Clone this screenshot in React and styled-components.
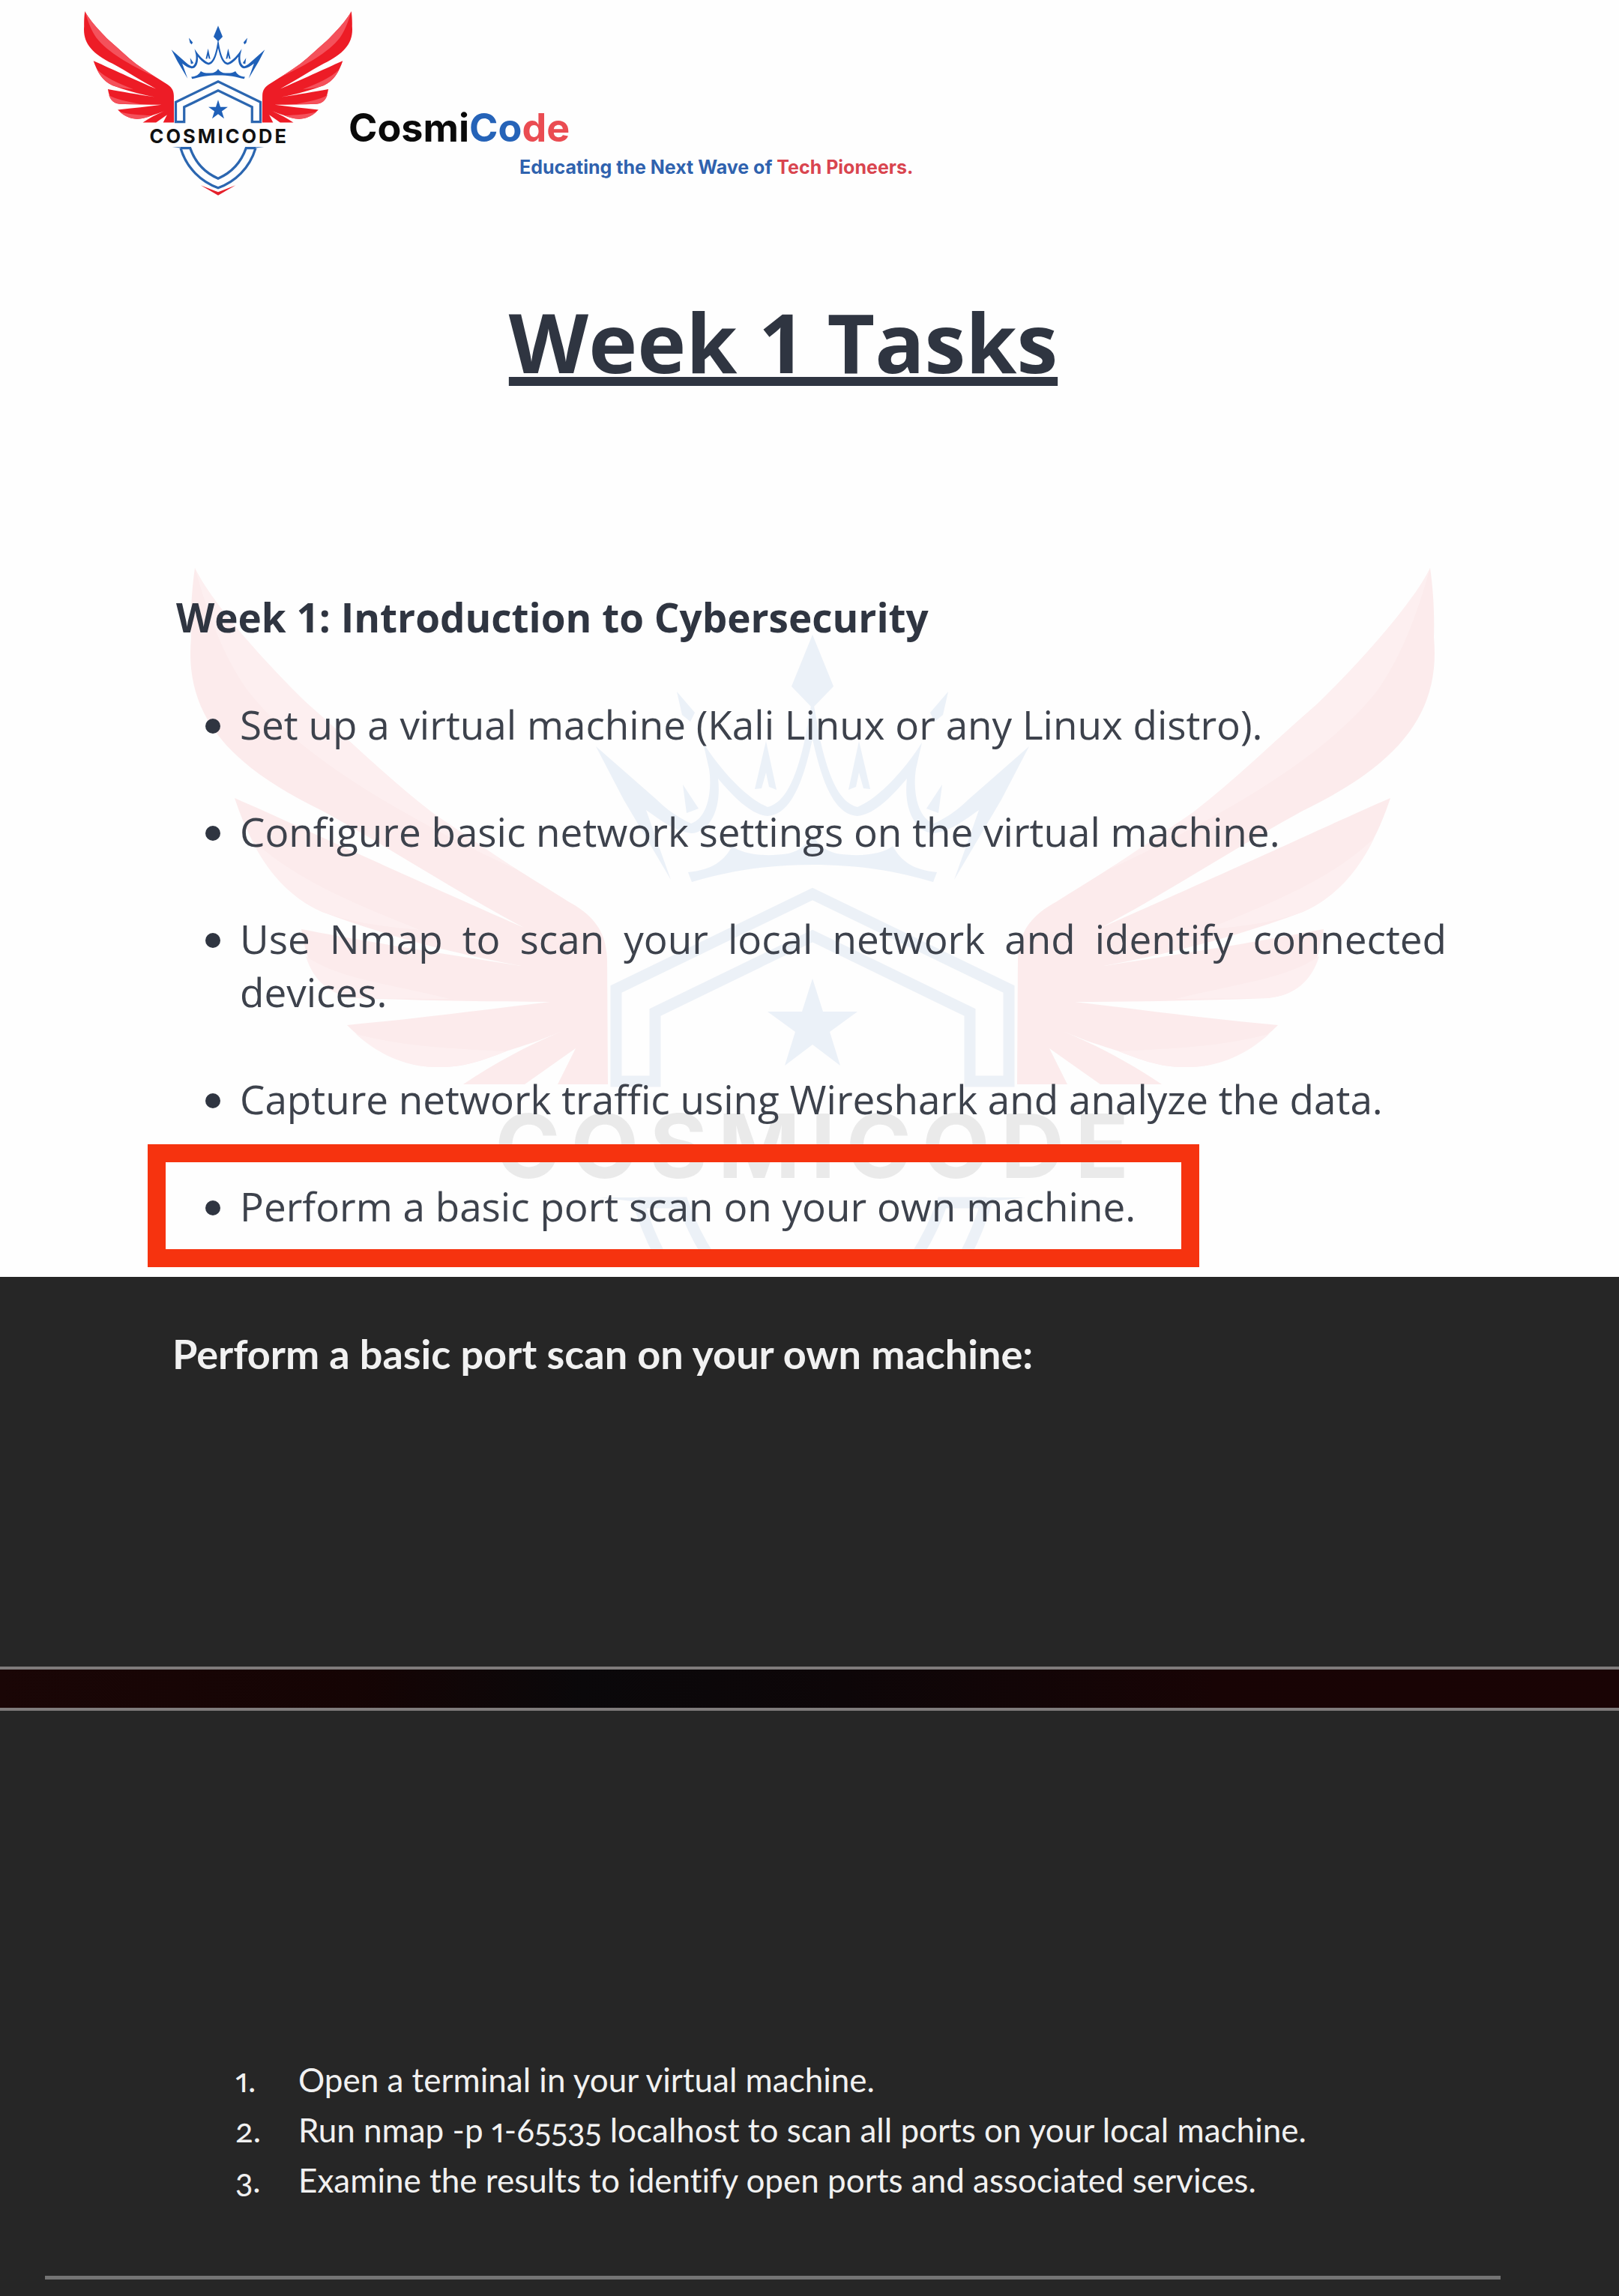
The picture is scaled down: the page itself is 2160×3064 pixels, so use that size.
import React from "react";
import styled, { createGlobalStyle } from "styled-components";

const GlobalStyle = createGlobalStyle`
  *, *::before, *::after { box-sizing: border-box; }
  body { margin: 0; background: #262626; font-variant-ligatures: none; }
  h1, h2, p, ul, ol { margin: 0; padding: 0; }
`;

const ink = "#2f3541";
const bodyFont = `"Open Sans", "Noto Sans", sans-serif`;
const slideFont = `Lato, "Open Sans", sans-serif`;

const Paper = styled.section`
  position: relative;
  background: #fefefe;
  padding-bottom: 59px;
  color: ${ink};
  font-family: ${bodyFont};
`;

const Header = styled.header`
  display: flex;
  align-items: flex-start;
  padding: 15px 112px 0;
`;

const LogoSvg = styled.svg`
  display: block;
  flex: none;
  width: ${(p) => p.$width};
  opacity: ${(p) => p.$opacity || 1};
`;

const Brand = styled.div`
  display: flex;
  flex-direction: column;
  gap: 4px;
  margin-left: -5px;
  padding-top: 124px;
  font-family: Inter, "Liberation Sans", sans-serif;
  font-weight: 700;
`;

const BrandName = styled.p`
  font-size: 52px;
  line-height: 64px;
  color: #0a0a0a;
`;

const Tagline = styled.p`
  padding-left: 228px;
  font-size: 25px;
  line-height: 32px;
  color: #2f62ae;
`;

const Tint = styled.span`
  color: ${(p) => p.$color};
`;

const Title = styled.h1`
  margin-top: 119px;
  padding-right: 70px;
  text-align: center;
  font-size: 110px;
  line-height: 148px;
  font-weight: 700;
  text-decoration: underline;
  text-decoration-thickness: 12px;
  text-underline-offset: 5px;
  text-decoration-skip-ink: none;
`;

const Watermark = styled.div`
  position: absolute;
  inset: 758px 0 30px;
  overflow: hidden;
  display: flex;
  justify-content: center;
  align-items: flex-start;
  padding-left: 8px;
`;

const Tasks = styled.div`
  position: relative;
  margin-top: 259px;
  padding: 0 230px 0 235px;
  font-size: 53px;
  line-height: 71px;
`;

const TasksHeading = styled.h2`
  font-size: 53px;
  line-height: 71px;
  font-weight: 700;
`;

const TaskList = styled.ul`
  display: flex;
  flex-direction: column;
  gap: 72px;
  margin-top: 72px;
  list-style: none;
`;

const Task = styled.li`
  position: relative;
  padding-left: 85px;
  text-align: justify;
  color: #3d424c;

  &::before {
    content: "";
    position: absolute;
    left: 39px;
    top: 28px;
    width: 20px;
    height: 20px;
    border-radius: 50%;
    background: ${ink};
  }
`;

const Highlight = styled.span`
  position: absolute;
  left: -38px;
  top: -47px;
  width: 1403px;
  height: 164px;
  border: 24px solid #f6330f;
`;

const Slide = styled.section`
  background: #262626;
  color: #f1f1f1;
  font-family: ${slideFont};
`;

const SlideTop = styled(Slide)`
  padding: 68px 230px 382px;
`;

const SlideHeading = styled.h2`
  font-size: 54px;
  line-height: 70px;
  font-weight: 700;
`;

const Divider = styled.div`
  height: 59px;
  border: solid #7f7b7b;
  border-width: 4px 0;
  background: linear-gradient(90deg, #1a0606, #150404 22%, #0a080a 36%, #0d0608 52%, #180405 75%, #1a0405);
`;

const SlideBottom = styled(Slide)`
  padding: 459px 158px 20px 60px;
`;

const Steps = styled.ol`
  padding-left: 254px;
  font-size: 44px;
  line-height: 67px;
  font-variant-numeric: oldstyle-nums proportional-nums;
  list-style: none;
  counter-reset: step;
`;

const Step = styled.li`
  display: grid;
  grid-template-columns: 84px 1fr;
  counter-increment: step;

  &::before {
    content: counter(step) ".";
  }
`;

const Rule = styled.hr`
  height: 5px;
  margin: 94px 0 0;
  border: 0;
  background: #747474;
`;

const WING =
  "M260 757 C275 790 330 860 410 938 C470 990 520 1040 576 1083 C640 1130 700 1165 758 1202 C795 1222 809 1245 810 1280 L811 1446 L744 1446 L768 1398 L700 1446 L618 1446 C660 1418 700 1396 750 1375 C720 1388 700 1394 675 1402 C640 1416 615 1424 580 1423 C540 1422 500 1404 463 1367 C560 1358 650 1346 734 1336 C650 1336 560 1334 477 1331 C430 1326 412 1300 402 1239 C480 1254 590 1272 695 1288 C590 1268 510 1246 430 1216 C370 1190 335 1130 313 1064 C400 1102 470 1136 699 1237 C600 1184 520 1130 430 1081 C300 1018 246 950 255 850 C254 815 256 785 260 757 Z";

const WING_SHEEN = [
  "M260 757 C275 790 330 860 410 938 C470 990 520 1040 576 1083 L690 1160 C540 1090 400 1010 330 920 C295 870 275 810 260 757 Z",
  "M335 1118 C390 1170 460 1200 560 1240 C500 1234 470 1230 430 1216 C385 1196 355 1160 335 1118 Z",
  "M408 1275 C450 1305 520 1312 600 1332 L477 1331 C440 1327 418 1308 408 1275 Z",
  "M475 1379 C540 1396 600 1398 675 1402 C640 1416 615 1424 580 1423 C540 1422 505 1406 475 1379 Z",
];

const CROWN_HALF =
  "M795 995 L876 1066 C890 1080 905 1090 922 1098 C946 1090 950 1050 946 1025 L938 990 C960 1025 995 1064 1024 1076 C1050 1070 1064 1030 1074 985 L1084 930 L1084 985 C1072 1040 1056 1086 1024 1088 C1000 1086 975 1058 958 1038 C963 1080 946 1110 922 1111 C900 1108 885 1096 862 1080 L876 1120 L895 1173 L832 1066 Z " +
  "M903 922 L927 950 L921 962 L910 953 Z " +
  "M911 1046 L932 1078 L916 1084 Z " +
  "M1022 988 L1036 1053 L1026 1049 L1022 1030 L1016 1051 L1007 1052 Z " +
  "M918 1163 C950 1160 966 1148 977 1128 C990 1139 1020 1143 1052 1138 C1068 1134 1076 1126 1084 1114 L1084 1153 C1020 1153 970 1162 923 1176 Z";

function WingHalf() {
  return (
    <>
      <path d={WING} fill="#ed1c26" />
      {WING_SHEEN.map((d) => (
        <path key={d} d={d} fill="#f4515b" />
      ))}
    </>
  );
}

function Logo({ width, opacity, decorative }) {
  return (
    <LogoSvg
      $width={width}
      $opacity={opacity}
      viewBox="254 757 1660 1146"
      role={decorative ? undefined : "img"}
      aria-label={decorative ? undefined : "CosmiCode logo"}
      aria-hidden={decorative ? true : undefined}
    >
      <WingHalf />
      <g transform="translate(2168 0) scale(-1 1)">
        <WingHalf />
      </g>
      <g fill="#1f60b8">
        <path d="M1084 846 L1112 915 L1084 944 L1056 915 Z" />
        <path d={CROWN_HALF} />
        <path d={CROWN_HALF} transform="translate(2168 0) scale(-1 1)" />
        <path d="M1084 1305 L1098 1349 L1144 1349 L1107 1376 L1121 1421 L1084 1393 L1047 1421 L1061 1376 L1024 1349 L1070 1349 Z" />
      </g>
      <g fill="none" stroke="#2b66b0" strokeWidth="15">
        <path d="M822 1442 V1319 L1084 1192 L1346 1319 V1442 H1294 V1350 L1084 1248 L874 1350 V1442 Z" />
        <path d="M852 1604 H911 C945 1700 1010 1760 1084 1792 C1158 1760 1223 1700 1257 1604 H1316" />
        <path d="M852 1604 C890 1730 980 1812 1084 1850 C1188 1812 1278 1730 1316 1604" />
      </g>
      <path d="M800 1597 H860 V1604 Z M1368 1597 H1308 V1604 Z" fill="#2b66b0" />
      <path d="M976 1834 L1084 1876 L1192 1834 L1084 1896 Z" fill="#e5202b" />
      <text
        x="1090"
        y="1571"
        textAnchor="middle"
        fontFamily="Inter, 'Liberation Sans', sans-serif"
        fontWeight="700"
        fontSize="118"
        letterSpacing="14"
        fill="#111"
      >
        COSMICODE
      </text>
    </LogoSvg>
  );
}

const tasks = [
  "Set up a virtual machine (Kali Linux or any Linux distro).",
  "Configure basic network settings on the virtual machine.",
  "Use Nmap to scan your local network and identify connected devices.",
  "Capture network traffic using Wireshark and analyze the data.",
  "Perform a basic port scan on your own machine.",
];

const steps = [
  "Open a terminal in your virtual machine.",
  "Run nmap -p 1-65535 localhost to scan all ports on your local machine.",
  "Examine the results to identify open ports and associated services.",
];

export default function App() {
  return (
    <main>
      <GlobalStyle />
      <Paper>
        <Watermark>
          <Logo width="1660px" opacity={0.08} decorative />
        </Watermark>
        <Header>
          <Logo width="358px" />
          <Brand>
            <BrandName>
              Cosmi<Tint $color="#2563b8">Co</Tint>
              <Tint $color="#ea4c52">de</Tint>
            </BrandName>
            <Tagline>
              Educating the Next Wave of <Tint $color="#d9454f">Tech Pioneers.</Tint>
            </Tagline>
          </Brand>
        </Header>
        <Title>Week 1 Tasks</Title>
        <Tasks>
          <TasksHeading>Week 1: Introduction to Cybersecurity</TasksHeading>
          <TaskList>
            {tasks.map((task, i) => (
              <Task key={task}>
                {task}
                {i === tasks.length - 1 && <Highlight />}
              </Task>
            ))}
          </TaskList>
        </Tasks>
      </Paper>
      <SlideTop>
        <SlideHeading>Perform a basic port scan on your own machine:</SlideHeading>
      </SlideTop>
      <Divider />
      <SlideBottom>
        <Steps>
          {steps.map((step) => (
            <Step key={step}>{step}</Step>
          ))}
        </Steps>
        <Rule />
      </SlideBottom>
    </main>
  );
}
